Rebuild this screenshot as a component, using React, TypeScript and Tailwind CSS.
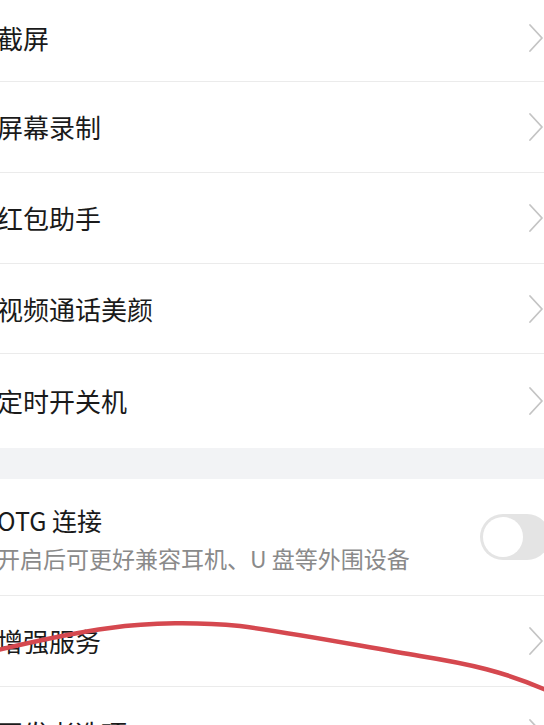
import React from 'react';

const Chevron = () => (
  <svg width="16" height="30" viewBox="0 0 16 30" className="shrink-0">
    <path d="M2 2 L14 15 L2 28" fill="none" stroke="#c4c4c4" strokeWidth="1.8" strokeLinecap="round" strokeLinejoin="round" />
  </svg>
);

const Row = ({ label, h, border = true }: { label: string; h: string; border?: boolean }) => (
  <div className={`flex items-center justify-between ${h} ${border ? 'border-b border-[#ebebeb]' : ''}`}>
    <span className="-ml-[3px] text-[26px] text-[#1a1a1a] leading-none">{label}</span>
    <Chevron />
  </div>
);

export default function App() {
  return (
    <div
      className="relative w-[544px] h-[725px] overflow-hidden bg-white"
      style={{ fontFamily: '"Noto Sans CJK SC", "Noto Sans", sans-serif' }}
    >
      <Row label="截屏" h="h-[82px] pb-[6px]" />
      <Row label="屏幕录制" h="h-[91px]" />
      <Row label="红包助手" h="h-[91px]" />
      <Row label="视频通话美颜" h="h-[90px]" />
      <Row label="定时开关机" h="h-[94px]" border={false} />

      <div className="h-[31px] bg-[#f2f3f5]" />

      <div className="flex items-center justify-between h-[117px] border-b border-[#ebebeb]">
        <div className="flex flex-col -ml-[3px] gap-[14px] pt-[4px]">
          <span className="text-[25px] text-[#1a1a1a] leading-none">OTG 连接</span>
          <span className="text-[23px] text-[#8a8a8a] leading-none">开启后可更好兼容耳机、U 盘等外围设备</span>
        </div>
        <div className="relative w-[70px] h-[46px] rounded-full bg-[#e4e4e4] -mr-[6px] shrink-0">
          <div className="absolute left-[3px] top-[3px] w-[40px] h-[40px] rounded-full bg-white" />
        </div>
      </div>

      <Row label="增强服务" h="h-[91px]" />
      <Row label="开发者选项" h="h-[91px]" border={false} />

      <svg className="absolute left-0 top-0 pointer-events-none" width="544" height="725" viewBox="0 0 544 725">
        <path
          d="M-2 650 C 40 640, 80 632, 110 628 C 150 622, 200 622, 240 626 C 300 634, 360 646, 420 656 C 470 664, 505 672, 546 690"
          fill="none"
          stroke="#d5484f"
          strokeWidth="4.5"
          strokeLinecap="round"
        />
      </svg>
    </div>
  );
}
